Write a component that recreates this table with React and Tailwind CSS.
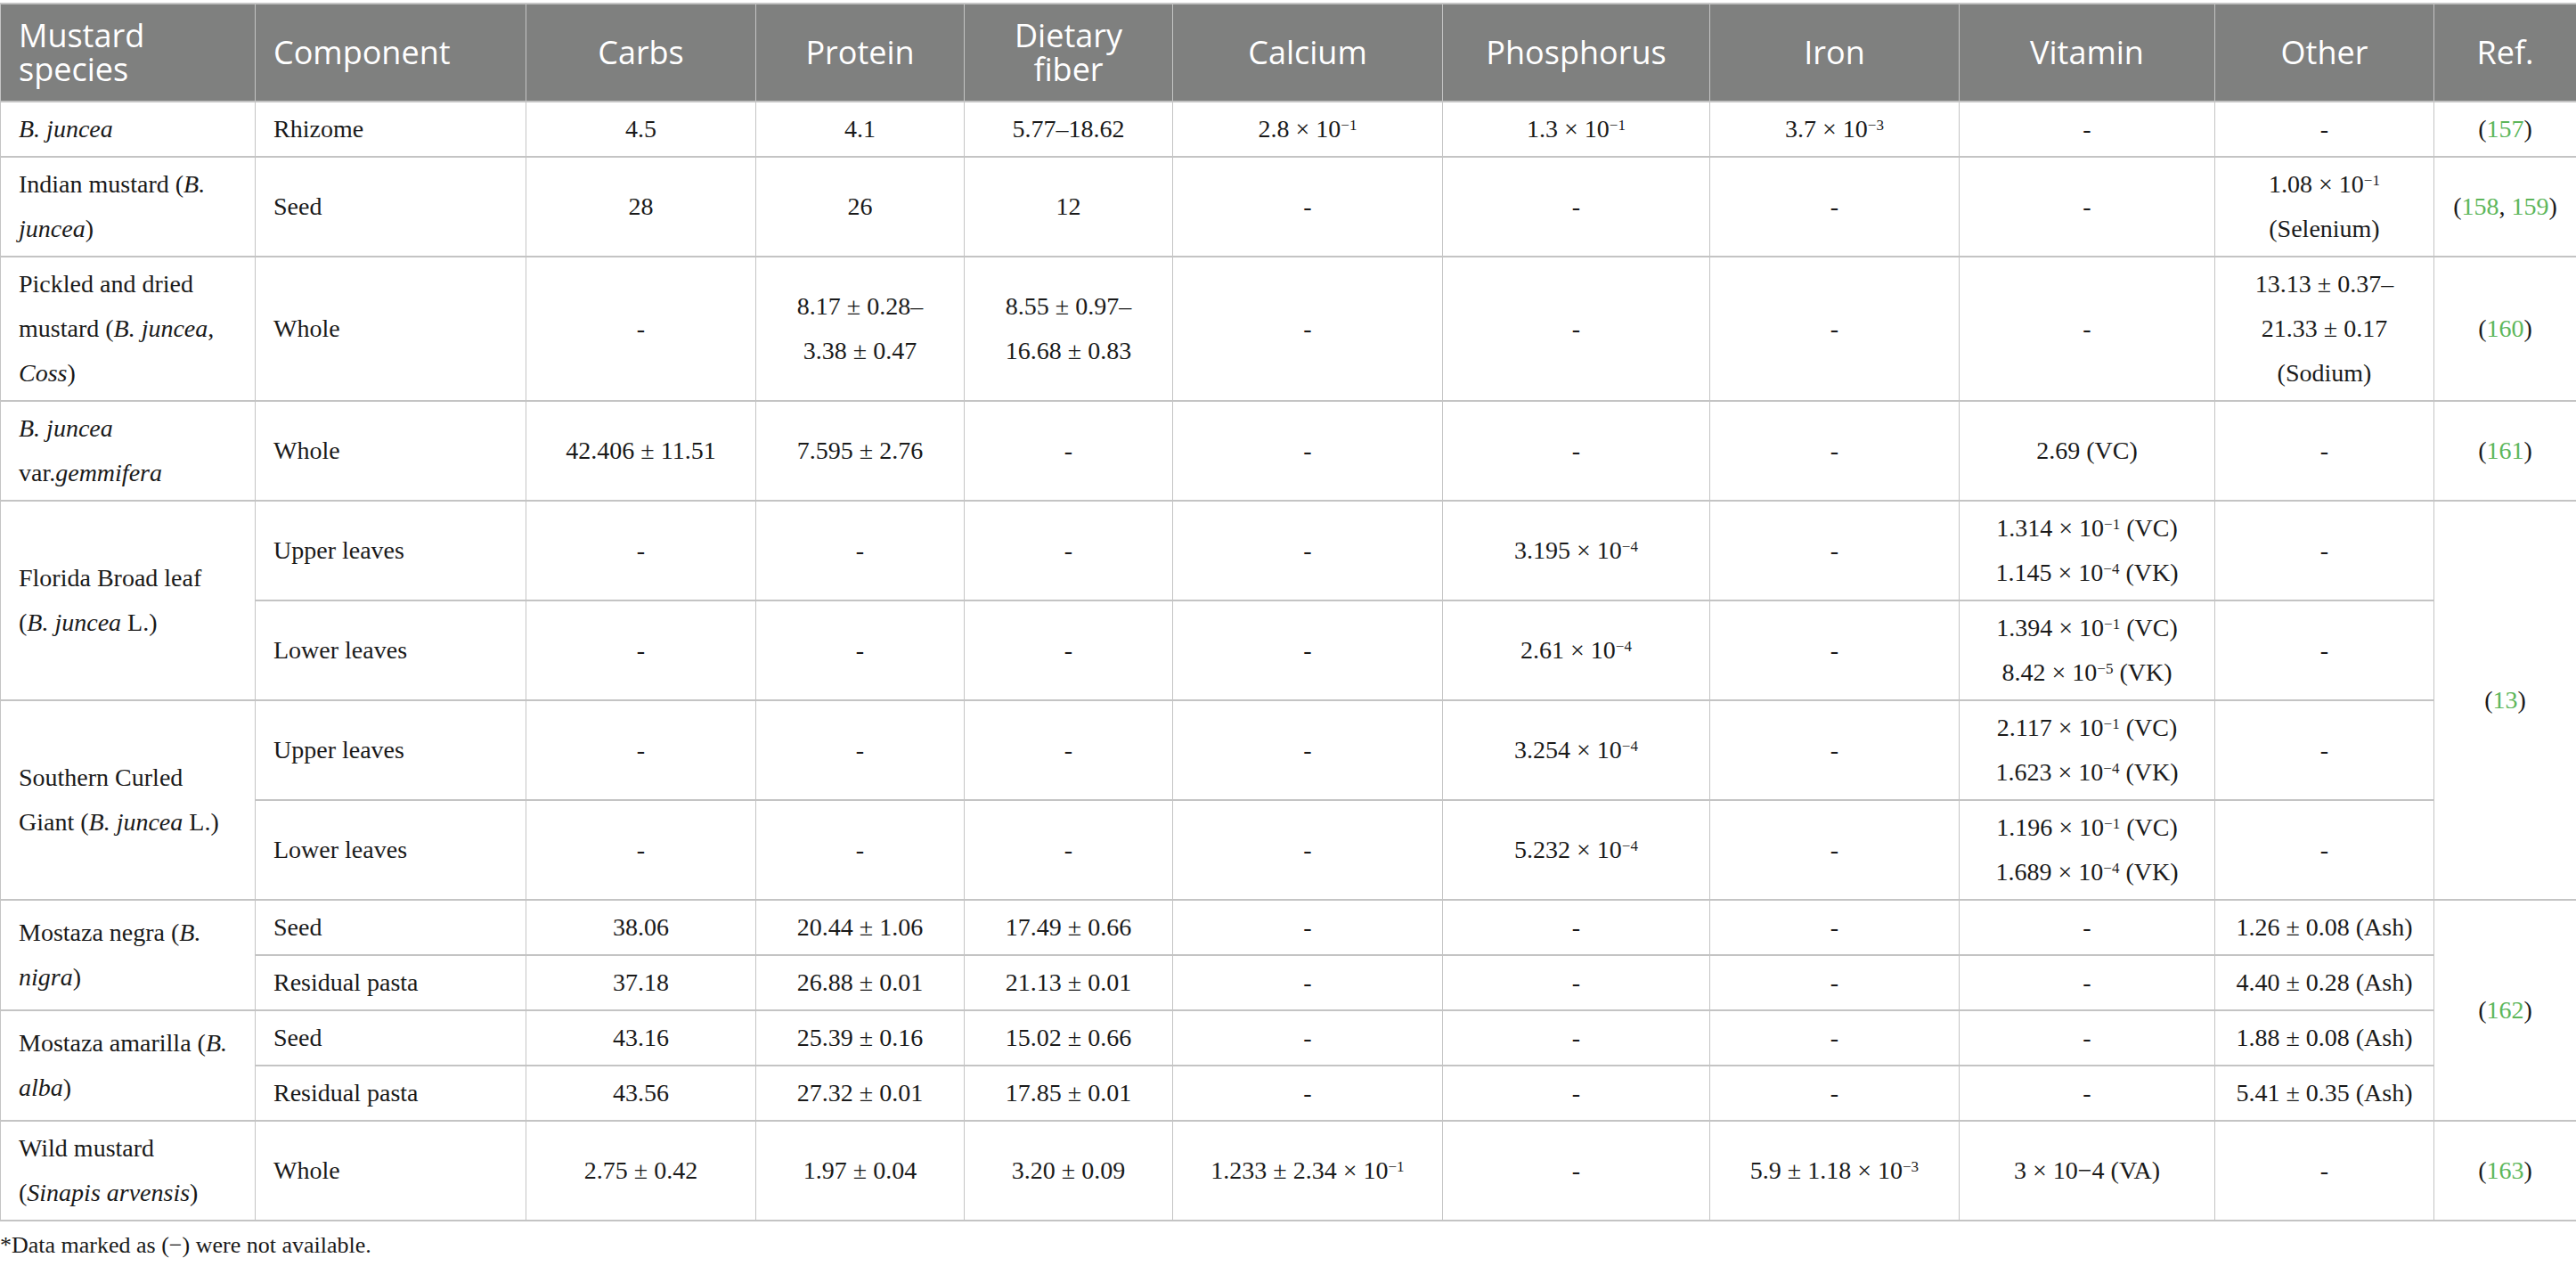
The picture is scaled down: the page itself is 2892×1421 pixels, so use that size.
import React from "react";

const widths = [286, 304, 258, 234, 234, 303, 300, 280, 287, 246, 160];

const headers = [
  "Mustard species",
  "Component",
  "Carbs",
  "Protein",
  "Dietary fiber",
  "Calcium",
  "Phosphorus",
  "Iron",
  "Vitamin",
  "Other",
  "Ref.",
];

// superscript exponent
function E({ children }) {
  return <sup className="text-[17px]">{children}</sup>;
}

function Ref({ nums }) {
  return (
    <>
      (
      {nums.map((n, i) => (
        <React.Fragment key={n}>
          {i > 0 && ", "}
          <span className="text-[#5db65a]">{n}</span>
        </React.Fragment>
      ))}
      )
    </>
  );
}

function Td({ children, left = false, rowSpan }) {
  return (
    <td
      rowSpan={rowSpan}
      className={
        "border-x border-y-2 border-[#c4c4c4] py-[5px] align-middle " +
        (left ? "px-[20px] text-left" : "px-2 text-center")
      }
    >
      {children}
    </td>
  );
}

// two-line header label, each line its own block
function Two({ a, b }) {
  return (
    <span className="flex flex-col">
      <span className="leading-[38px]">{a}</span>
      <span className="leading-[38px]">{b}</span>
    </span>
  );
}

export default function App() {
  return (
    <div className="min-h-screen bg-white pt-[3px]">
      <table className="w-full table-fixed border-collapse font-['Liberation_Serif',serif] text-[28px] leading-[50px] text-[#1a1a1a]">
        <colgroup>
          {widths.map((w, i) => (
            <col key={i} style={{ width: w }} />
          ))}
        </colgroup>
        <thead>
          <tr className="bg-[#7f807f]">
            {headers.map((h, i) => (
              <th
                key={h}
                className={
                  "h-[110px] border-x border-y-2 border-[#c4c4c4] py-0 align-middle font-['Open_Sans',sans-serif] text-[36px] font-normal leading-[40px] text-white " +
                  (i < 2 ? "px-[20px] text-left" : "px-2 text-center")
                }
              >
                {h === "Mustard species" ? (
                  <Two a="Mustard" b="species" />
                ) : h === "Dietary fiber" ? (
                  <Two a="Dietary" b="fiber" />
                ) : (
                  h
                )}
              </th>
            ))}
          </tr>
        </thead>
        <tbody>
          {/* B. juncea */}
          <tr>
            <Td left>
              <i>B. juncea</i>
            </Td>
            <Td left>Rhizome</Td>
            <Td>4.5</Td>
            <Td>4.1</Td>
            <Td>5.77–18.62</Td>
            <Td>
              2.8 × 10<E>−1</E>
            </Td>
            <Td>
              1.3 × 10<E>−1</E>
            </Td>
            <Td>
              3.7 × 10<E>−3</E>
            </Td>
            <Td>-</Td>
            <Td>-</Td>
            <Td>
              <Ref nums={["157"]} />
            </Td>
          </tr>

          {/* Indian mustard */}
          <tr>
            <Td left>
              Indian mustard (<i>B.</i>
              <br />
              <i>juncea</i>)
            </Td>
            <Td left>Seed</Td>
            <Td>28</Td>
            <Td>26</Td>
            <Td>12</Td>
            <Td>-</Td>
            <Td>-</Td>
            <Td>-</Td>
            <Td>-</Td>
            <Td>
              1.08 × 10<E>−1</E>
              <br />
              (Selenium)
            </Td>
            <Td>
              <Ref nums={["158", "159"]} />
            </Td>
          </tr>

          {/* Pickled and dried */}
          <tr>
            <Td left>
              Pickled and dried
              <br />
              mustard (<i>B. juncea</i>,
              <br />
              <i>Coss</i>)
            </Td>
            <Td left>Whole</Td>
            <Td>-</Td>
            <Td>
              8.17 ± 0.28–
              <br />
              3.38 ± 0.47
            </Td>
            <Td>
              8.55 ± 0.97–
              <br />
              16.68 ± 0.83
            </Td>
            <Td>-</Td>
            <Td>-</Td>
            <Td>-</Td>
            <Td>-</Td>
            <Td>
              13.13 ± 0.37–
              <br />
              21.33 ± 0.17
              <br />
              (Sodium)
            </Td>
            <Td>
              <Ref nums={["160"]} />
            </Td>
          </tr>

          {/* var. gemmifera */}
          <tr>
            <Td left>
              <i>B. juncea</i>
              <br />
              var.<i>gemmifera</i>
            </Td>
            <Td left>Whole</Td>
            <Td>42.406 ± 11.51</Td>
            <Td>7.595 ± 2.76</Td>
            <Td>-</Td>
            <Td>-</Td>
            <Td>-</Td>
            <Td>-</Td>
            <Td>2.69 (VC)</Td>
            <Td>-</Td>
            <Td>
              <Ref nums={["161"]} />
            </Td>
          </tr>

          {/* Florida Broad leaf */}
          <tr>
            <Td left rowSpan={2}>
              Florida Broad leaf
              <br />(<i>B. juncea</i> L.)
            </Td>
            <Td left>Upper leaves</Td>
            <Td>-</Td>
            <Td>-</Td>
            <Td>-</Td>
            <Td>-</Td>
            <Td>
              3.195 × 10<E>−4</E>
            </Td>
            <Td>-</Td>
            <Td>
              1.314 × 10<E>−1</E> (VC)
              <br />
              1.145 × 10<E>−4</E> (VK)
            </Td>
            <Td>-</Td>
            <Td rowSpan={4}>
              <Ref nums={["13"]} />
            </Td>
          </tr>
          <tr>
            <Td left>Lower leaves</Td>
            <Td>-</Td>
            <Td>-</Td>
            <Td>-</Td>
            <Td>-</Td>
            <Td>
              2.61 × 10<E>−4</E>
            </Td>
            <Td>-</Td>
            <Td>
              1.394 × 10<E>−1</E> (VC)
              <br />
              8.42 × 10<E>−5</E> (VK)
            </Td>
            <Td>-</Td>
          </tr>

          {/* Southern Curled Giant */}
          <tr>
            <Td left rowSpan={2}>
              Southern Curled
              <br />
              Giant (<i>B. juncea</i> L.)
            </Td>
            <Td left>Upper leaves</Td>
            <Td>-</Td>
            <Td>-</Td>
            <Td>-</Td>
            <Td>-</Td>
            <Td>
              3.254 × 10<E>−4</E>
            </Td>
            <Td>-</Td>
            <Td>
              2.117 × 10<E>−1</E> (VC)
              <br />
              1.623 × 10<E>−4</E> (VK)
            </Td>
            <Td>-</Td>
          </tr>
          <tr>
            <Td left>Lower leaves</Td>
            <Td>-</Td>
            <Td>-</Td>
            <Td>-</Td>
            <Td>-</Td>
            <Td>
              5.232 × 10<E>−4</E>
            </Td>
            <Td>-</Td>
            <Td>
              1.196 × 10<E>−1</E> (VC)
              <br />
              1.689 × 10<E>−4</E> (VK)
            </Td>
            <Td>-</Td>
          </tr>

          {/* Mostaza negra */}
          <tr>
            <Td left rowSpan={2}>
              Mostaza negra (<i>B.</i>
              <br />
              <i>nigra</i>)
            </Td>
            <Td left>Seed</Td>
            <Td>38.06</Td>
            <Td>20.44 ± 1.06</Td>
            <Td>17.49 ± 0.66</Td>
            <Td>-</Td>
            <Td>-</Td>
            <Td>-</Td>
            <Td>-</Td>
            <Td>1.26 ± 0.08 (Ash)</Td>
            <Td rowSpan={4}>
              <Ref nums={["162"]} />
            </Td>
          </tr>
          <tr>
            <Td left>Residual pasta</Td>
            <Td>37.18</Td>
            <Td>26.88 ± 0.01</Td>
            <Td>21.13 ± 0.01</Td>
            <Td>-</Td>
            <Td>-</Td>
            <Td>-</Td>
            <Td>-</Td>
            <Td>4.40 ± 0.28 (Ash)</Td>
          </tr>

          {/* Mostaza amarilla */}
          <tr>
            <Td left rowSpan={2}>
              Mostaza amarilla (<i>B.</i>
              <br />
              <i>alba</i>)
            </Td>
            <Td left>Seed</Td>
            <Td>43.16</Td>
            <Td>25.39 ± 0.16</Td>
            <Td>15.02 ± 0.66</Td>
            <Td>-</Td>
            <Td>-</Td>
            <Td>-</Td>
            <Td>-</Td>
            <Td>1.88 ± 0.08 (Ash)</Td>
          </tr>
          <tr>
            <Td left>Residual pasta</Td>
            <Td>43.56</Td>
            <Td>27.32 ± 0.01</Td>
            <Td>17.85 ± 0.01</Td>
            <Td>-</Td>
            <Td>-</Td>
            <Td>-</Td>
            <Td>-</Td>
            <Td>5.41 ± 0.35 (Ash)</Td>
          </tr>

          {/* Wild mustard */}
          <tr>
            <Td left>
              Wild mustard
              <br />(<i>Sinapis arvensis</i>)
            </Td>
            <Td left>Whole</Td>
            <Td>2.75 ± 0.42</Td>
            <Td>1.97 ± 0.04</Td>
            <Td>3.20 ± 0.09</Td>
            <Td>
              1.233 ± 2.34 × 10<E>−1</E>
            </Td>
            <Td>-</Td>
            <Td>
              5.9 ± 1.18 × 10<E>−3</E>
            </Td>
            <Td>3 × 10−4 (VA)</Td>
            <Td>-</Td>
            <Td>
              <Ref nums={["163"]} />
            </Td>
          </tr>
        </tbody>
      </table>

      <p className="mt-[2px] font-['Liberation_Serif',serif] text-[26px] leading-[50px] text-[#1a1a1a]">
        *Data marked as (−) were not available.
      </p>
    </div>
  );
}
